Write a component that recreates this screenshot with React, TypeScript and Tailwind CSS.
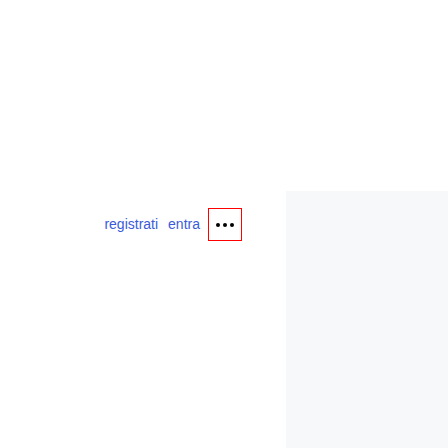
export default function App() {
  return (
    <div className="flex h-[448px] w-[448px] bg-white" style={{ fontFamily: '"Liberation Sans", Arial, sans-serif' }}>
      {/* left column holds the header links */}
      <div className="flex w-[286px] items-start justify-end pr-[44px] pt-[208px]">
        <nav className="flex h-[33px] items-center">
          <a href="#" className="text-[14px] text-[#3b5bdb]">registrati</a>
          <a href="#" className="ml-[10px] text-[14px] text-[#3b5bdb]">entra</a>
          <button className="ml-[8px] flex h-[33px] w-[34px] items-center justify-center gap-[3px] border border-[#ff0000]">
            <span className="h-[4px] w-[4px] rounded-full bg-black" />
            <span className="h-[4px] w-[4px] rounded-full bg-black" />
            <span className="h-[4px] w-[4px] rounded-full bg-black" />
          </button>
        </nav>
      </div>
      <div className="mt-[191px] flex-1 bg-[#f7f8fa]" />
    </div>
  );
}
